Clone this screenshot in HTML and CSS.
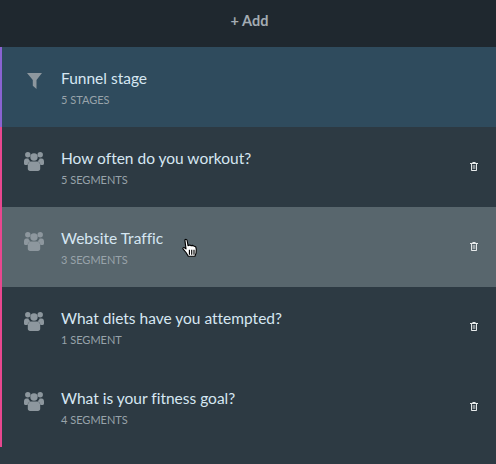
FILE: index.html
```html
<!DOCTYPE html>
<html lang="en">
<head>
<meta charset="utf-8">
<title>Segments</title>
<link rel="stylesheet" href="styles.css">
</head>
<body>
<svg class="defs" width="0" height="0" aria-hidden="true">
  <symbol id="group" viewBox="0 0 20 19">
    <circle cx="3.800" cy="2.800" r="2.700"/><circle cx="16.200" cy="2.800" r="2.700"/><circle cx="10" cy="5" r="3.700"/>
    <path d="M0 9.500c0-2 1-3 2.200-3h2.200c.5 1.300 1.200 2.300 2 2.800-1.600.8-2.600 2.200-2.800 3.700H1.500C.6 13 0 12.400 0 11.500zM20 9.500c0-2-1-3-2.200-3h-2.200c-.5 1.300-1.200 2.300-2 2.800 1.600.8 2.600 2.200 2.800 3.700h2.100c.9 0 1.500-.6 1.500-1.500z"/>
    <path d="M7 9.500h6c2 0 3.200 1.700 3.200 4.300v3c0 1.300-.9 2.200-2.200 2.200H6c-1.300 0-2.200-.9-2.200-2.200v-3C3.800 11.200 5 9.500 7 9.500z"/>
  </symbol>
  <symbol id="trash" viewBox="0 0 8 9">
    <path fill-rule="evenodd" d="M2.700 0h2.600l.5 1H8v1H7v6.200c0 .5-.3.8-.8.8H1.800c-.5 0-.8-.3-.8-.8V2H0V1h2.200zM2 2v6h4V2zm.8 1h.7v4h-.7zm1.700 0h.7v4h-.7z"/>
  </symbol>
</svg>
<main class="panel">
  <header class="add-bar">+ Add</header>
  <ul class="list">
    <li class="row row-funnel">
      <svg class="row-icon funnel" viewBox="0 0 15 16"><path d="M0 0h15L9.500 7v9L5.800 12.800V7z"/></svg>
      <div class="row-text"><div class="title">Funnel stage</div><div class="sub">5 stages</div></div>
    </li>
    <li class="row">
      <svg class="row-icon"><use href="#group"/></svg>
      <div class="row-text"><div class="title">How often do you workout?</div><div class="sub">5 segments</div></div>
      <svg class="trash"><use href="#trash"/></svg>
    </li>
    <li class="row row-hover">
      <svg class="row-icon"><use href="#group"/></svg>
      <div class="row-text"><div class="title">Website Traffic</div><div class="sub">3 segments</div></div>
      <svg class="trash"><use href="#trash"/></svg>
      <svg class="cursor" viewBox="0 0 14 18">
        <path fill="#fff" stroke="#000" stroke-width="1" stroke-linejoin="round" d="M2.500 1.500c.8-.8 1.800-.5 2 .5l.8 4.500 1.500-.5 1.200.5 1.500-.2 1.300.7 1.200.5.500 2-.2 3.500-1 2.800H5.500L3.500 12.500 1 9.500c-.5-.8.300-1.700 1.200-1.200l1.300 1z"/>
        <path stroke="#000" stroke-width="1" d="M6.500 10v4.500M8.500 10v4.500M10.500 10v4.500"/>
      </svg>
    </li>
    <li class="row">
      <svg class="row-icon"><use href="#group"/></svg>
      <div class="row-text"><div class="title">What diets have you attempted?</div><div class="sub">1 segment</div></div>
      <svg class="trash"><use href="#trash"/></svg>
    </li>
    <li class="row">
      <svg class="row-icon"><use href="#group"/></svg>
      <div class="row-text"><div class="title">What is your fitness goal?</div><div class="sub">4 segments</div></div>
      <svg class="trash"><use href="#trash"/></svg>
    </li>
  </ul>
</main>
</body>
</html>
```

FILE: styles.css
```css
html, body { margin: 0; padding: 0; }
body {
  width: 496px;
  height: 464px;
  overflow: hidden;
  background: #2d3a43;
  font-family: "Lato", "Open Sans", sans-serif;
  font-variant-ligatures: none;
}
.defs { position: absolute; }
.panel { display: flex; flex-direction: column; }
.add-bar {
  height: 47px;
  line-height: 42px;
  background: #1f282f;
  color: #a3acb3;
  font-size: 14.500px;
  font-weight: 700;
  text-align: center;
  box-sizing: border-box;
  padding-left: 3px;
}
.list { list-style: none; margin: 0; padding: 0; }
.row {
  position: relative;
  display: flex;
  align-items: flex-start;
  height: 80px;
  box-sizing: border-box;
  padding: 21px 16px 0 22px;
  border-left: 2px solid #e8478f;
  background: #2d3a43;
}
.row-funnel { background: #2f4b5d; border-left-color: #8a63d2; }
.row-hover { background: #58666d; }
.row-icon {
  width: 20px;
  height: 19px;
  flex: none;
  margin-top: 4px;
  fill: #8d979e;
}
.funnel {
  width: 15px;
  height: 16px;
  margin: 5px 2px 0 3px;
}
.row-text { flex: 1; margin-left: 17px; }
.title {
  color: #d6e7f2;
  font-size: 15.500px;
  line-height: 20px;
}
.sub {
  margin-top: 4px;
  color: #98a3aa;
  font-size: 11px;
  line-height: 16px;
  text-transform: uppercase;
}
.trash {
  width: 8px;
  height: 9px;
  flex: none;
  margin-top: 14px;
  margin-right: 2px;
  fill: #e6e9ea;
}
.cursor {
  position: absolute;
  left: 180px;
  top: 31px;
  width: 16px;
  height: 21px;
}
```
